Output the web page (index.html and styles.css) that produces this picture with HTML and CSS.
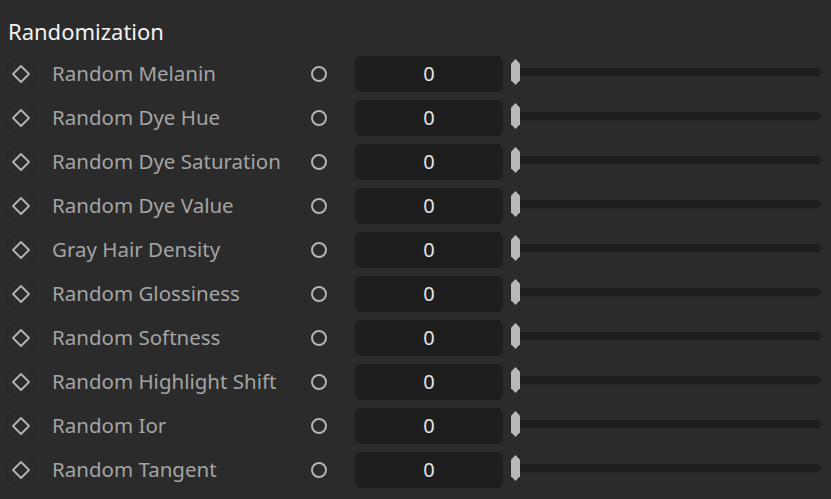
FILE: index.html
```html
<!DOCTYPE html>
<html lang="en">
<head>
<meta charset="UTF-8" />
<title>Randomization</title>
<link rel="stylesheet" href="styles.css">
</head>
<body>
<div class="panel">
  <h2 class="panel-title">Randomization</h2>
  <div class="rows" id="rows"></div>
</div>

<script>
  (() => {
    const labels = [
      "Random Melanin",
      "Random Dye Hue",
      "Random Dye Saturation",
      "Random Dye Value",
      "Gray Hair Density",
      "Random Glossiness",
      "Random Softness",
      "Random Highlight Shift",
      "Random Ior",
      "Random Tangent"
    ];
    const rows = document.getElementById('rows');

    labels.forEach(label => {
      const row = document.createElement('div');
      row.className = 'row';
      row.innerHTML = `
        <span class="key">
          <svg width="20" height="20" viewBox="0 0 20 20"><path d="M10 2 L18 10 L10 18 L2 10 Z" fill="none" stroke="#b4b4b4" stroke-width="1.8" stroke-linejoin="round"/></svg>
        </span>
        <span class="label">${label}</span>
        <span class="reset"></span>
        <span class="field">0</span>
        <span class="slider">
          <span class="handle"></span>
          <span class="track"></span>
        </span>`;
      rows.appendChild(row);
    });
  })();
</script>
</body>
</html>
```

FILE: styles.css
```css
* {
  box-sizing: border-box;
}
body {
  margin: 0;
  background: #2b2b2b;
  font-family: 'Noto Sans', 'Open Sans', sans-serif;
  overflow: hidden;
}
.panel {
  width: 831px;
  height: 499px;
}
.panel-title {
  margin: 0;
  height: 52px;
  padding: 16px 0 0 8px;
  font-size: 22px;
  font-weight: 400;
  line-height: 30px;
  color: #f2f2f2;
}
.rows {
  display: flex;
  flex-direction: column;
}
.row {
  display: flex;
  align-items: center;
  height: 44px;
}
.key {
  width: 32px;
  height: 32px;
  margin-left: 5px;
  border-radius: 50%;
  border: 1px solid #262626;
  display: flex;
  align-items: center;
  justify-content: center;
}
.label {
  width: 259px;
  margin-left: 15px;
  margin-top: -2px;
  font-size: 20.5px;
  color: #a4a4a4;
  white-space: nowrap;
}
.reset {
  width: 16px;
  height: 16px;
  border: 2px solid #b4b4b4;
  border-radius: 50%;
}
.field {
  width: 148px;
  height: 36px;
  margin-left: 28px;
  padding-bottom: 2px;
  background: #1e1e1e;
  border-radius: 6px;
  display: flex;
  align-items: center;
  justify-content: center;
  font-size: 20px;
  color: #e6e6e6;
}
.slider {
  flex: 1;
  margin: -4px 9px 0 8px;
  display: flex;
  align-items: center;
}
.handle {
  width: 9px;
  height: 26px;
  background: #b9b9b9;
  clip-path: polygon(50% 0, 100% 18%, 100% 82%, 50% 100%, 0 82%, 0 18%);
}
.track {
  flex: 1;
  height: 9px;
  background: #1e1e1e;
  clip-path: polygon(0 0, calc(100% - 4px) 0, 100% 50%, calc(100% - 4px) 100%, 0 100%);
}
```
